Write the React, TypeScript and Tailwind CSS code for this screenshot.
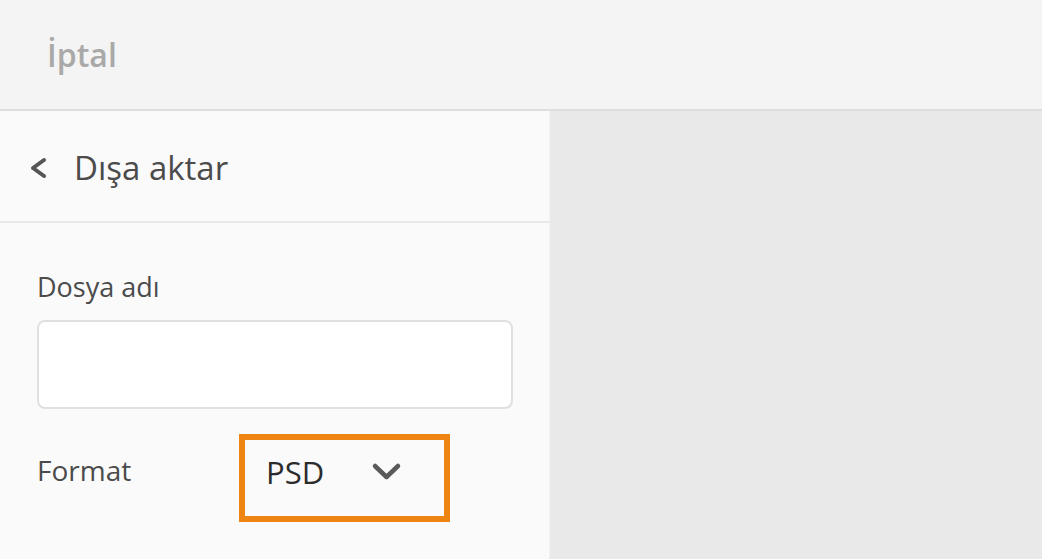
export default function App() {
  return (
    <div className="flex h-[559px] w-[1042px] flex-col overflow-hidden bg-[#e9e9e9] font-['Open_Sans',sans-serif]">
      <div className="flex h-[111px] shrink-0 items-center border-b-2 border-[#dedede] bg-[#f4f4f4] pl-[47px]">
        <span className="text-[32px] font-semibold text-[#a9a9a9]">İptal</span>
      </div>

      <div className="flex flex-1">
        <div className="w-[550px] shrink-0 border-r border-[#f2f2f2] bg-[#fafafa]">
          <div className="flex h-[112px] items-center border-b-2 border-[#e8e8e8] pb-[2px] pl-[29px] pt-[6px]">
            <svg width="18" height="22" viewBox="0 0 18 22" className="text-[#555]">
              <polyline points="15,3 4,11 15,19" fill="none" stroke="currentColor" strokeWidth="4" strokeLinecap="round" strokeLinejoin="round" />
            </svg>
            <span className="ml-[27px] text-[33px] text-[#4b4b4b]">Dışa aktar</span>
          </div>

          <div className="px-[37px] pt-[44px]">
            <label className="block text-[27px] leading-[40px] text-[#4b4b4b]">Dosya adı</label>
            <div className="mt-[13px] h-[89px] w-[476px] rounded-[8px] border-2 border-[#e0e0e0] bg-white" />

            <div className="mt-[25px] flex items-start">
              <span className="mt-[16px] w-[202px] text-[28px] leading-[40px] text-[#4b4b4b]">Format</span>
              <div className="flex h-[88px] w-[211px] items-start border-[6px] border-[#ee8412] pl-[21px] pt-[9px]">
                <span className="text-[31px] leading-[46px] text-[#2c2c2c]">PSD</span>
                <svg width="32" height="20" viewBox="0 0 32 20" className="ml-[47px] mt-[13px] text-[#5a5a5a]">
                  <polyline points="4,4 15.5,15 27,4" fill="none" stroke="currentColor" strokeWidth="4.5" strokeLinecap="round" strokeLinejoin="round" />
                </svg>
              </div>
            </div>
          </div>
        </div>
        <div className="flex-1" />
      </div>
    </div>
  );
}
